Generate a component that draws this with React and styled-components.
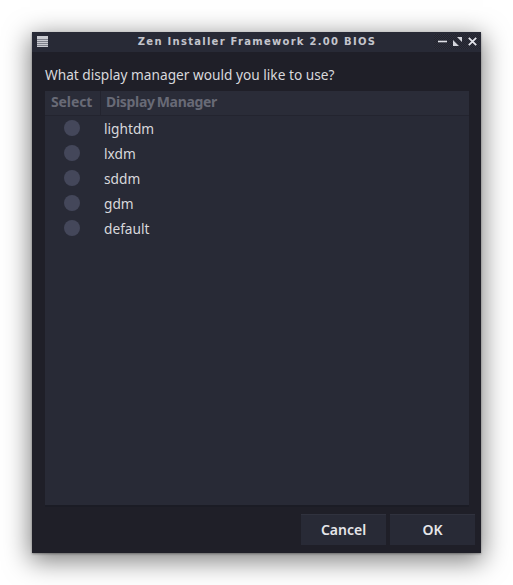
import React from "react"
import styled, { createGlobalStyle } from "styled-components"

const managers = ["lightdm", "lxdm", "sddm", "gdm", "default"]

const GlobalStyle = createGlobalStyle`
  html, body {
    margin: 0;
    padding: 0;
    background: #fff;
  }
  body {
    width: 513px;
    height: 585px;
    overflow: hidden;
    font-family: "Noto Sans", sans-serif;
  }
`

const Page = styled.div`
  box-sizing: border-box;
  width: 513px;
  height: 585px;
  padding: 32px;
`

const Window = styled.div`
  display: flex;
  flex-direction: column;
  width: 449px;
  height: 521px;
  background: #1f1f28;
  box-shadow: 0 6px 24px 2px rgba(0, 0, 0, 0.5), 0 1px 2px rgba(0, 0, 0, 0.35);
`

const TitleBar = styled.div`
  display: flex;
  align-items: center;
  height: 20px;
  padding: 0 1px 2px 5px;
  box-sizing: border-box;
  background: #282a36;
  flex-shrink: 0;
`

const TitleText = styled.div`
  flex: 1;
  text-align: center;
  font-family: "DejaVu Sans", sans-serif;
  font-size: 10px;
  font-weight: 700;
  letter-spacing: 1.27px;
  color: #c4c5cc;
  padding-left: 32px;
`

const Controls = styled.div`
  display: flex;
  align-items: center;
  gap: 6px;
  height: 15px;
  padding: 0 3px 0 4px;
  background: repeating-conic-gradient(#22232d 0 25%, #2d2f3b 0 50%) 0 0 / 2px 2px;
`

const Body = styled.div`
  display: flex;
  flex-direction: column;
  flex: 1;
  min-height: 0;
  padding: 14px 6px 8px 13px;
`

const Prompt = styled.div`
  font-size: 13.7px;
  line-height: 18px;
  color: #d8d8dc;
  margin-bottom: 7px;
`

const Table = styled.div`
  display: flex;
  flex-direction: column;
  width: 424px;
  height: 416px;
  flex-shrink: 0;
  box-sizing: border-box;
  background: #282a36;
  border-bottom: 2px solid #1b1c25;
`

const HeaderRow = styled.div`
  display: flex;
  align-items: center;
  height: 24px;
  flex-shrink: 0;
  background: #2a2c38;
  border-bottom: 1px solid #23242f;
`

const HeaderCell = styled.div`
  box-sizing: border-box;
  width: ${(p) => p.$width};
  flex: ${(p) => (p.$width ? "none" : 1)};
  padding: 0 0 4px ${(p) => p.$pad}px;
  height: 100%;
  display: flex;
  align-items: center;
  font-size: 14px;
  font-weight: 700;
  color: #686a76;
  white-space: pre;
  letter-spacing: ${(p) => (p.$width ? "-0.1px" : "-0.32px")};
  word-spacing: -1.2px;
  border-right: ${(p) => (p.$width ? "1px solid #23242f" : "none")};
`

const Rows = styled.div`
  display: flex;
  flex-direction: column;
  margin-top: -1px;
`

const Row = styled.div`
  display: flex;
  align-items: center;
  height: 25px;
`

const RadioCell = styled.div`
  display: flex;
  justify-content: center;
  width: 54px;
  flex-shrink: 0;
`

const Radio = styled.span`
  display: block;
  width: 16px;
  height: 16px;
  border-radius: 50%;
  background: #44475a;
`

const Name = styled.span`
  margin: 2px 0 0 5px;
  font-size: 13.7px;
  color: #d8d8dc;
`

const Footer = styled.div`
  display: flex;
  justify-content: flex-end;
  gap: 4px;
  margin-top: 7px;
`

const Button = styled.button`
  width: 85px;
  height: 31px;
  padding: 0 0 2px;
  border: none;
  border-top: 1px solid #30323e;
  background: #282a36;
  color: #e6e6e9;
  font-family: "Noto Sans", sans-serif;
  font-size: 14px;
  font-weight: 600;
`

function MenuIcon() {
  return (
    <svg width="11" height="11" viewBox="0 0 11 11">
      <rect width="11" height="11" fill="#c9cad0" />
      <path d="M0 3.5h11M0 5.5h11M0 7.5h11M0 9.5h11" stroke="#6c6e78" strokeWidth="0.8" />
    </svg>
  )
}

function WindowControls() {
  return (
    <Controls>
      <svg width="9" height="9" viewBox="0 0 9 9">
        <path d="M0 4.5h9" stroke="#e0e1e8" strokeWidth="1.6" />
      </svg>
      <svg width="9" height="9" viewBox="0 0 9 9">
        <path d="M0 9V3l6 6zM9 0v5L4 0z" fill="#d4d5dc" />
      </svg>
      <svg width="9" height="9" viewBox="0 0 9 9">
        <path d="M0.8 0.8l7.4 7.4M8.2 0.8L0.8 8.2" stroke="#e0e1e8" strokeWidth="1.8" />
      </svg>
    </Controls>
  )
}

export default function App() {
  return (
    <Page>
      <GlobalStyle />
      <Window>
        <TitleBar>
          <MenuIcon />
          <TitleText>Zen Installer Framework 2.00 BIOS</TitleText>
          <WindowControls />
        </TitleBar>
        <Body>
          <Prompt>What display manager would you like to use?</Prompt>
          <Table>
            <HeaderRow>
              <HeaderCell $width="56px" $pad={6}>Select</HeaderCell>
              <HeaderCell $pad={5}>Display Manager</HeaderCell>
            </HeaderRow>
            <Rows>
              {managers.map((name) => (
                <Row key={name}>
                  <RadioCell>
                    <Radio />
                  </RadioCell>
                  <Name>{name}</Name>
                </Row>
              ))}
            </Rows>
          </Table>
          <Footer>
            <Button>Cancel</Button>
            <Button>OK</Button>
          </Footer>
        </Body>
      </Window>
    </Page>
  )
}
